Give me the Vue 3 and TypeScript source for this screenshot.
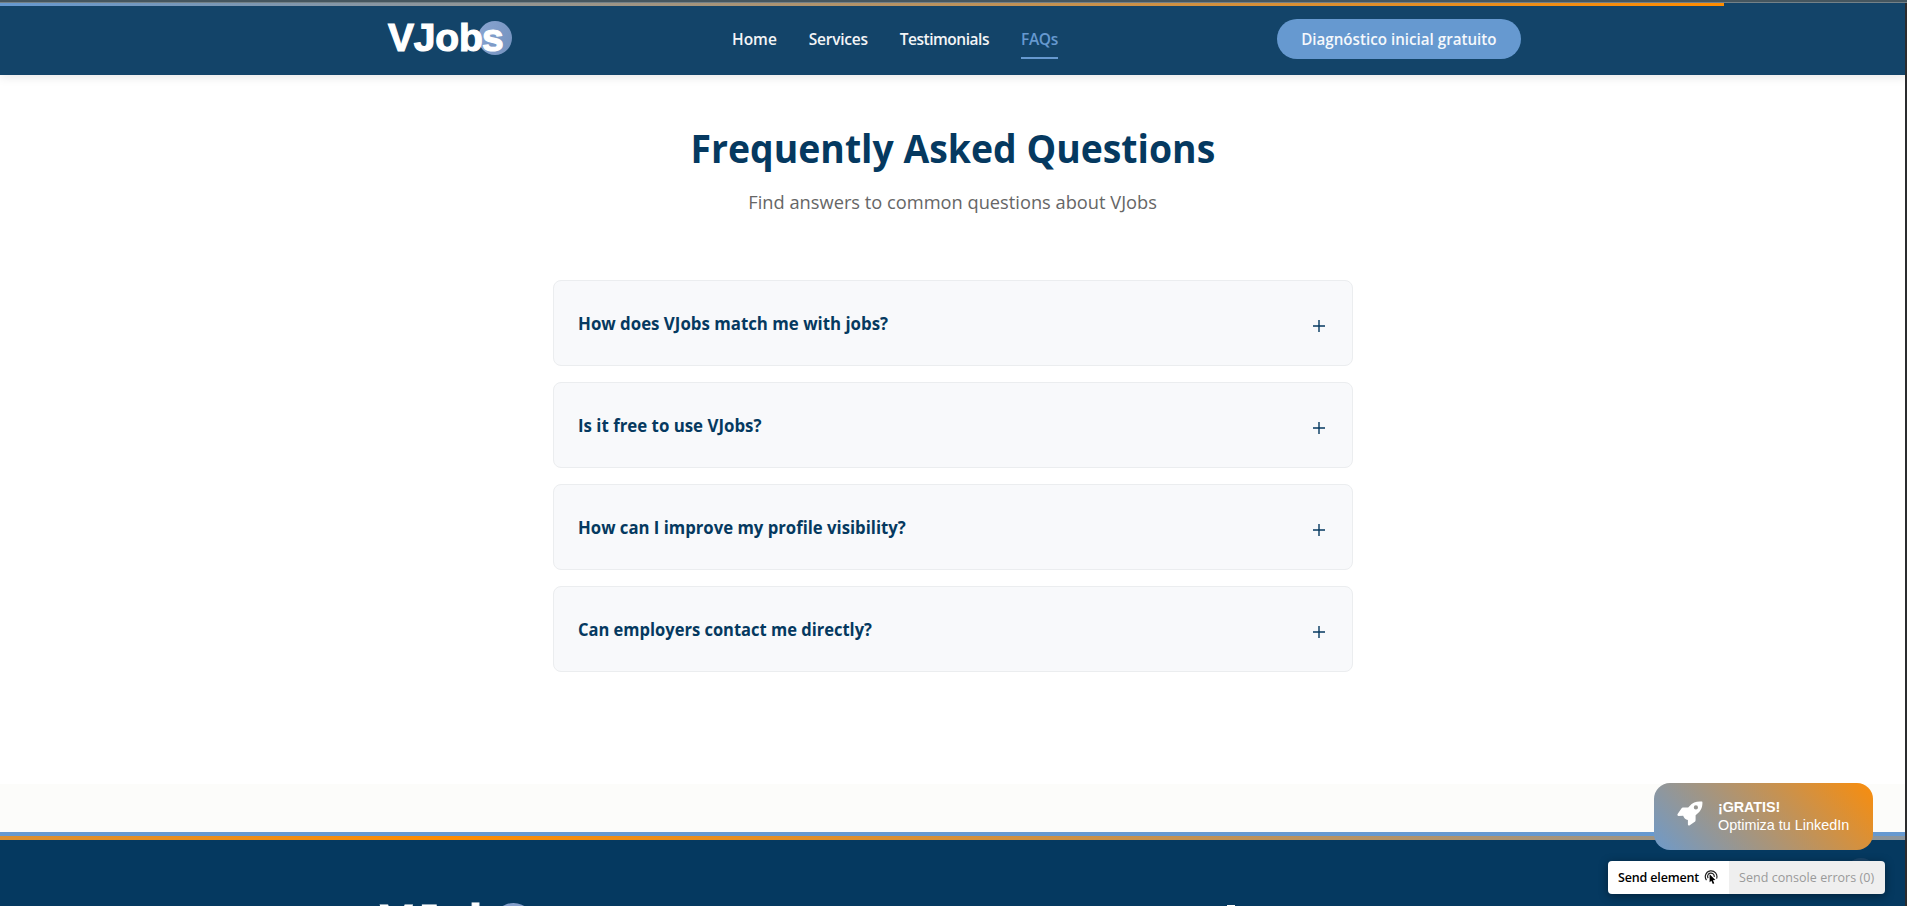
<script setup lang="ts">
interface NavItem { label: string; key: string; active?: boolean }
interface Question { text: string; key: string }

const navItems: NavItem[] = [
  { label: 'Home', key: 'home' },
  { label: 'Services', key: 'services' },
  { label: 'Testimonials', key: 'testimonials' },
  { label: 'FAQs', key: 'faqs', active: true },
]

const questions: Question[] = [
  { text: 'How does VJobs match me with jobs?', key: 'match' },
  { text: 'Is it free to use VJobs?', key: 'free' },
  { text: 'How can I improve my profile visibility?', key: 'profile' },
  { text: 'Can employers contact me directly?', key: 'contact' },
]
</script>

<template>
  <div class="page">
    <div class="top-edge"></div>
    <div class="progress"></div>
    <header class="header">
      <div class="header-inner">
        <a class="logo"><span class="logo-text">VJob</span><span class="logo-dot">s</span></a>
        <nav class="nav">
          <a v-for="item in navItems" :key="item.key" class="nav-link" :class="[item.key, { active: item.active }]">{{ item.label }}</a>
        </nav>
        <button class="cta"><span>Diagnóstico inicial gratuito</span></button>
      </div>
    </header>

    <main class="faq">
      <h1 class="title"><span>Frequently Asked Questions</span></h1>
      <p class="subtitle"><span>Find answers to common questions about VJobs</span></p>
      <div class="list">
        <div v-for="q in questions" :key="q.key" class="card">
          <h3 class="question" :class="q.key">{{ q.text }}</h3>
          <svg class="plus" viewBox="0 0 12 12"><path d="M0 6h12M6 0v12" /></svg>
        </div>
      </div>
    </main>

    <div class="gap-band"></div>
    <footer class="footer">
      <div class="footer-stripe"></div>
      <div class="footer-inner">
        <div class="footer-logo"><span class="footer-name">VJob</span><span class="footer-dot">s</span></div>
        <div class="footer-mark"></div>
      </div>
    </footer>

    <div class="page-edge"></div>
    <div class="scroll-top"></div>

    <a class="promo">
      <svg class="rocket" viewBox="0 0 26 25">
        <path fill-rule="evenodd" d="M25 .6C20 .1 15.800 1.200 12.400 5.300L11.200 6.600H6.600C5.500 6.600 4.700 7 4.100 8L.6 13C.1 14 .6 14.900 1.500 14.900L6.200 14.800C6.500 16.600 8.600 18.600 10.900 19L10.900 23.600C10.900 24.500 11.700 24.900 12.400 24.400L17.400 21.100C18.200 20.600 18.600 19.700 18.600 18.700V14.200L20 13C24.200 9.800 25.700 5.600 25.400 1ZM18.900 4.300A2.100 2.100 0 1 1 18.900 8.500A2.100 2.100 0 1 1 18.900 4.300Z" />
      </svg>
      <span class="promo-text"><strong>¡GRATIS!</strong><span>Optimiza tu LinkedIn</span></span>
    </a>

    <div class="devbar">
      <button class="send"><span>Send element</span>
        <svg class="pointer" viewBox="0 0 14 15">
          <path class="arc" d="M2.500 10.200A5.800 5.800 0 1 1 12.600 8.600M4.200 8.200A3.300 3.300 0 1 1 10.200 6.800" />
          <path class="arrow" d="M5.600 4.300V12.200L7.400 10.700L8.800 14L10.300 13.300L8.900 10.200L11.400 10Z" />
        </svg>
      </button>
      <button class="errors"><span>Send console errors (0)</span></button>
    </div>
  </div>
</template>

<style>
html, body { margin: 0; overflow: hidden; }
</style>

<style scoped>
.page {
  position: relative;
  width: 100vw;
  height: 906px;
  overflow: hidden;
  background: #fff;
  font-family: "Open Sans", "Noto Sans", sans-serif;
  color: #053960;
}
.top-edge {
  position: absolute; inset: 0 0 auto; z-index: 5;
  height: 3px; box-sizing: border-box;
  background: #45565f; border-bottom: 1px solid #738188;
}
.progress {
  position: absolute; left: 0; top: 3px; z-index: 5;
  width: 1724px; height: 3px;
  background: linear-gradient(90deg, #6699d0, #ff8c00);
}
.header {
  position: relative; z-index: 2;
  height: 75px; background: #134469;
  box-shadow: 0 2px 10px rgba(0, 0, 0, .1);
}
.header-inner {
  display: flex; align-items: flex-start;
  width: 1133px; margin-left: 388px;
}
.logo {
  display: flex; width: 125px; height: 34px; margin: 21px 219px 0 0;
  font: 700 39px/34px "Liberation Sans", Arial, sans-serif; color: #fff;
  -webkit-text-stroke: 1.200px #fff;
}
.logo-text { position: relative; z-index: 1; width: 90px; letter-spacing: -.2px; white-space: nowrap; }
.logo-dot {
  flex: none; width: 34px; height: 34px; box-sizing: border-box; padding-left: 4px;
  border-radius: 50%; background: linear-gradient(110deg, #89a5d2, #7492be);
}
.nav { display: flex; gap: 32px; margin-top: 27px; }
.nav-link {
  white-space: nowrap; height: 32px; box-sizing: border-box;
  font-size: 15.500px; font-weight: 650; line-height: 25px; color: #f3f5f7;
}
.services { letter-spacing: -.25px; }
.testimonials { letter-spacing: -.48px; }
.nav-link.active { color: #6699d0; border-bottom: 2px solid #6699d0; font-weight: 600; letter-spacing: -.3px; }
.cta {
  margin: 19px 0 0 auto; width: 244px; height: 40px; padding: 0;
  border: 0; border-radius: 20px; background: #6699d0; color: #f5f8fc;
  font: 650 15.500px/24px "Open Sans", sans-serif; white-space: nowrap;
}
.cta span { display: inline-block; transform: scaleX(.978); }
.faq { height: 709px; text-align: center; }
.title { margin: 0; padding-top: 45px; font-size: 40px; line-height: 56px; font-weight: 700; }
.title span { display: inline-block; transform: scaleX(.934); }
.subtitle { margin: 13px 0 0; font-size: 19px; line-height: 26px; color: #666; }
.subtitle span { display: inline-block; transform: scaleX(.961); }
.title, .subtitle { width: 1905px; }
.list { display: flex; flex-direction: column; gap: 16px; width: 800px; margin: 65px 0 0 553px; }
.card {
  display: flex; justify-content: space-between; align-items: center;
  height: 86px; box-sizing: border-box; padding: 0 27px 0 23.500px;
  border: 1px solid #ebedef; border-radius: 8px; background: #f8f9fb;
}
.question { margin: 0; font-size: 17.600px; line-height: 26px; font-weight: 700; white-space: nowrap; transform-origin: left; }
.match, .free { transform: scaleX(.957); }
.profile { transform: scaleX(.95); }
.contact { transform: scaleX(.938); }
.plus { width: 12px; height: 12px; margin-top: 6px; fill: none; stroke: #053960; stroke-width: 1.400; }
.gap-band { height: 48px; background: #fcfcfa; }
.footer { height: 74px; overflow: hidden; background: #053960; border-top: 4px solid #6699d0; box-sizing: border-box; }
.footer-stripe { height: 4px; background: linear-gradient(90deg, #6699d0 -1457px, #ff8c00 450px, #6699d0 2357px); }
.footer-inner { display: flex; justify-content: space-between; width: 855px; margin: 63px 0 0 380px; }
.footer-logo { display: flex; color: #fff; font: 700 49px/37px "Liberation Sans", Arial, sans-serif; }
.footer-name { width: 112px; letter-spacing: -.4px; -webkit-text-stroke: 1px #fff; white-space: nowrap; }
.footer-dot { width: 43px; height: 43px; border-radius: 50%; background: #849fcb; text-indent: 5px; }
.footer-mark { width: 8px; height: 2px; margin-top: 2px; background: #fff; }
.page-edge { position: absolute; z-index: 4; right: 0; top: 3px; bottom: 0; width: 2px; background: #2b2c2e; }
.scroll-top { position: absolute; left: 1845px; top: 858px; width: 32px; height: 32px; border-radius: 50%; background: #1b466b; }
.promo {
  position: absolute; left: 1654px; top: 783px; width: 219px; height: 67px; box-sizing: border-box;
  display: flex; align-items: flex-start; gap: 15px; padding: 18px 0 0 23px;
  border-radius: 16px; background: linear-gradient(45deg, #6e9aca, #f98d0c);
  font-family: "Liberation Sans", Arial, sans-serif; color: #fff;
}
.rocket { width: 26px; height: 25px; fill: #fff; }
.promo-text { display: flex; flex-direction: column; font-size: 14.400px; line-height: 18px; white-space: nowrap; margin-top: -3px; }
.promo-text strong { letter-spacing: -.1px; }
.devbar {
  position: absolute; left: 1608px; top: 861px; display: flex; width: 277px; height: 33px;
  border-radius: 4px; overflow: hidden; box-shadow: 0 2px 10px rgba(0, 0, 0, .4);
}
.devbar button {
  display: flex; align-items: center; padding: 0 0 0 10px; border: 0; white-space: nowrap;
  font: 600 12.500px/20px "Open Sans", sans-serif;
}
.send { width: 121px; gap: 5px; background: #fff; color: #000; }
.devbar .send { letter-spacing: -.15px; }
.devbar .errors { width: 156px; background: #efefef; color: #9a9a9a; font-weight: 500; letter-spacing: .05px; }
.pointer { width: 14px; height: 15px; }
.arc { fill: none; stroke: #222; stroke-width: 1.200; }
.arrow { fill: #000; }
</style>
